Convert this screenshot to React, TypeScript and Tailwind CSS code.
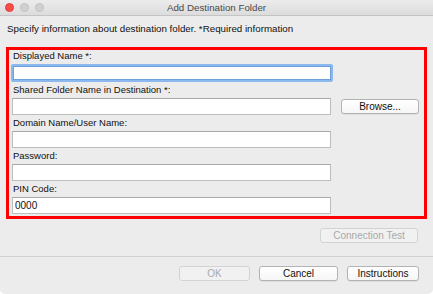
import React from "react";

const Field = ({ label, value = "", focused = false, right }: { label: string; value?: string; focused?: boolean; right?: React.ReactNode }) => (
  <div className="flex flex-col">
    <div className="h-[12px] leading-[12px] text-[9.5px] text-[#111] pl-[2px]">{label}</div>
    <div className="flex items-center mt-[2px]">
      {focused ? (
        <div className="w-[322px] h-[18px] rounded-[2px] bg-[#8bb8ef] p-[2px]">
          <div className="w-full h-full bg-white border border-[#6e9fd8]" />
        </div>
      ) : (
        <div className="ml-[1px] w-[319px] h-[17px] bg-white border border-[#bdbdbd] border-t-[#a9a9a9] flex items-center pl-[2px] text-[10px] text-[#111]">
          {value}
        </div>
      )}
      {right}
    </div>
  </div>
);

const Btn = ({ children, className = "", disabled = false }: { children: React.ReactNode; className?: string; disabled?: boolean }) => (
  <div
    className={`h-[15px] rounded-[3px] flex items-center justify-center text-[10px] leading-none ${
      disabled
        ? "bg-[#f1f1f1] border border-[#d3d3d3] text-[#a9a9a9]"
        : "bg-gradient-to-b from-white to-[#f6f6f6] border border-[#b3b3b3] text-[#111] shadow-[0_0.5px_0.5px_rgba(0,0,0,0.12)]"
    } ${className}`}
  >
    {children}
  </div>
);

export default function App() {
  return (
    <div
      className="w-[433px] h-[294px] bg-white"
      style={{ fontFamily: '"Liberation Sans", Arial, sans-serif' }}
    >
      <div className="w-[433px] h-[294px] bg-[#ececec] rounded-b-[5px] flex flex-col overflow-hidden">
        <div className="relative h-[16px] bg-gradient-to-b from-[#ececec] to-[#dcdcdc] border-b border-[#c4c4c4] flex items-center justify-center">
          <div className="absolute left-[5px] top-[3px] flex gap-[6px]">
            <div className="w-[9px] h-[9px] rounded-full bg-[#fc4c48] border border-[#e0403a]" />
            <div className="w-[9px] h-[9px] rounded-full bg-[#d1d1d1] border border-[#c2c2c2]" />
            <div className="w-[9px] h-[9px] rounded-full bg-[#d1d1d1] border border-[#c2c2c2]" />
          </div>
          <span className="text-[9.75px] text-[#4a4a4a] leading-none">Add Destination Folder</span>
        </div>
        <div className="pl-[7px] mt-[7px] h-[12px] leading-[12px] text-[9.75px] text-[#111]">
          Specify information about destination folder. *Required information
        </div>
        <div className="mx-[6px] mt-[12px] h-[172px] border-[3px] border-[#ff0000] pl-[2px] flex flex-col gap-[2px]">
          <Field label="Displayed Name *:" focused />
          <Field
            label="Shared Folder Name in Destination *:"
            right={<Btn className="ml-[10px] w-[78px]">Browse...</Btn>}
          />
          <Field label="Domain Name/User Name:" />
          <Field label="Password:" />
          <Field label="PIN Code:" value="0000" />
        </div>
        <div className="flex justify-end pr-[15px] mt-[9px]">
          <Btn disabled className="w-[98px]">Connection Test</Btn>
        </div>
        <div className="mt-[13px] h-px bg-[#d0d0d0]" />
        <div className="flex justify-end pr-[14px] mt-[9px] gap-[9px]">
          <Btn disabled className="w-[71px]">OK</Btn>
          <Btn className="w-[79px]">Cancel</Btn>
          <Btn className="w-[72px]">Instructions</Btn>
        </div>
      </div>
    </div>
  );
}
